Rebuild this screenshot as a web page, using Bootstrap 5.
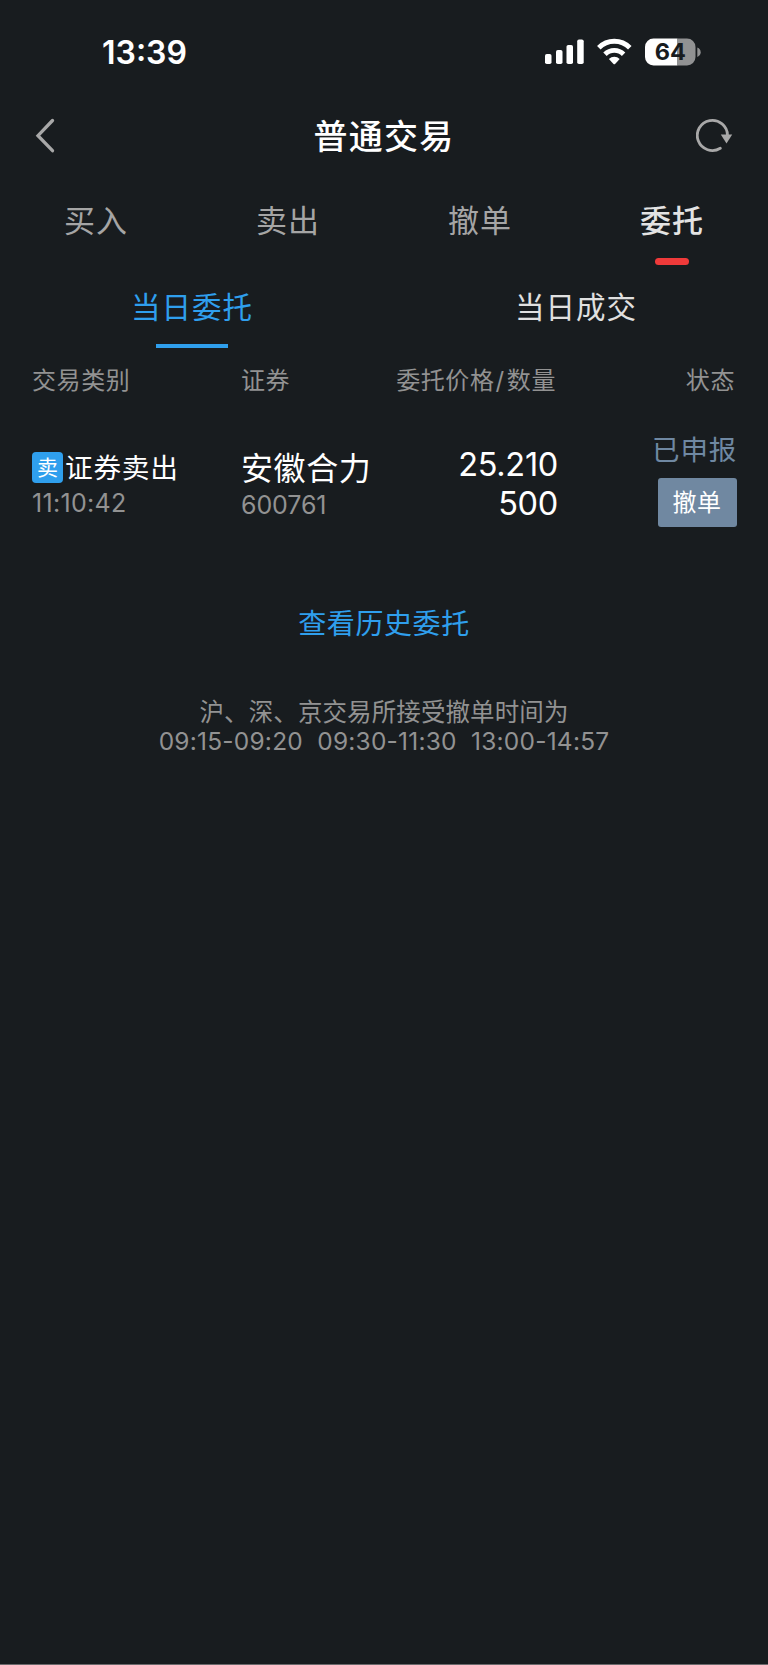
<!DOCTYPE html>
<html lang="zh-CN">
<head>
<meta charset="utf-8">
<meta name="viewport" content="width=device-width, initial-scale=1">
<title>普通交易</title>
<link href="https://cdn.jsdelivr.net/npm/bootstrap@5.3.0/dist/css/bootstrap.min.css" rel="stylesheet">
<style>
  body { background: #181c1f; color: #fff; font-family: Inter, "Noto Sans CJK SC", sans-serif; }
  .screen { height: 1665px; border-bottom: 1px solid #6b696c; }
  .statusbar { height: 104px; padding: 0 69px 0 102px; }
  .clock { font-size: 32px; font-weight: 600; line-height: 104px; padding-top: 1px; }
  .titlebar { height: 64px; padding: 0 32px 0 34px; }
  .titlebar h1 { font-size: 34px; font-weight: 500; line-height: 64px; letter-spacing: 1.2px; padding: 2px 0 0 2px; }
  .tabs-main .nav-link { height: 104px; padding: 0; font-size: 31px; line-height: 105px; letter-spacing: 1px; color: #a5a5a5; }
  .tabs-main .nav-link.active { color: #e3e3e3; font-weight: 500; }
  .tabs-main .nav-link.active::after { content: ""; position: absolute; left: 50%; bottom: 7px; width: 34px; height: 7px; margin-left: -17px; border-radius: 4px; background: #ef3a3a; }
  .tabs-sub .nav-link { height: 76px; padding: 0; font-size: 29.5px; line-height: 71px; letter-spacing: 1px; color: #e0e0e0; }
  .tabs-sub .nav-link.active { color: #2f9fed; }
  .tabs-sub .nav-link.active::after { content: ""; position: absolute; left: 50%; bottom: 0; width: 72px; height: 4px; margin-left: -36px; background: #2f9fed; }
  .order-grid { display: grid; grid-template-columns: 209px 149px 168px 1fr; padding: 0 31px 0 32px; }
  .head-row { height: 64px; font-size: 24px; line-height: 65px; letter-spacing: .6px; color: #929292; }
  .head-row .text-end { padding-right: 2px; }
  .slash { margin: 0 2px 0 1px; }
  .order-row { height: 148px; }
  .side { width: 31px; height: 31px; border-radius: 4px; background: #2f9fed; font-size: 21px; line-height: 32px; }
  .kind { font-size: 27.7px; line-height: 32px; letter-spacing: .7px; margin-left: 2px; }
  .muted { font-size: 25px; color: #929292; }
  .stock { font-size: 32px; line-height: 36px; letter-spacing: .6px; }
  .figure-num { font-size: 32.5px; line-height: 39px; letter-spacing: -.3px; }
  .state { font-size: 27.5px; line-height: 36px; letter-spacing: .8px; color: #6f88a2; }
  .btn-cancel { width: 79px; height: 49px; padding: 0 1px 0 0; border: 0; border-radius: 3px; background: #7088a1; color: #fff; font-size: 24px; line-height: 50px; letter-spacing: .4px; }
  .history { font-size: 28px; line-height: 40px; letter-spacing: .6px; color: #2f9fed; }
  .hint { font-size: 24.5px; line-height: 29px; color: #929292; white-space: pre; letter-spacing: .1px; }
</style>
</head>
<body>
<main class="screen overflow-hidden">
  <div class="statusbar d-flex align-items-center justify-content-between">
    <span class="clock">13:39</span>
    <svg width="157" height="34" viewBox="0 0 157 34" fill="#fff" class="overflow-visible" aria-hidden="true">
      <rect x="3" y="19" width="6.5" height="10" rx="1.8"/>
      <rect x="14" y="15" width="6.5" height="14" rx="1.8"/>
      <rect x="24.5" y="10" width="6.5" height="19" rx="1.8"/>
      <rect x="35.2" y="4.500" width="6.500" height="24.500" rx="1.8"/>
      <g fill="none" stroke="#fff" stroke-width="4.900">
        <path d="M56.800 12.800a21.700 21.700 0 0 1 31 0"/>
        <path d="M63 19.200a13.200 13.200 0 0 1 18.600 0"/>
      </g>
      <path d="M66.900 24a7.800 7.800 0 0 1 10.800 0l-4.600 4.900q-.8.700-1.600 0z"/>
      <path d="M111.500 3.500h24v27h-24a8.500 8.500 0 0 1-8.500-8.500v-10a8.500 8.500 0 0 1 8.500-8.500z"/>
      <path d="M135.500 3.500h9.500a8.500 8.500 0 0 1 8.500 8.500v10a8.500 8.500 0 0 1-8.500 8.500h-9.500z" fill="#919293"/>
      <path d="M155.300 12.500q3.400 1.500 3.400 4.700t-3.400 4.700z" fill="#919293"/>
      <text x="128.300" y="25.400" text-anchor="middle" font-family="Inter" font-size="23.500" font-weight="700" fill="#181c1f">64</text>
    </svg>
  </div>

  <header class="titlebar d-flex align-items-center justify-content-between">
    <svg width="36" height="40" viewBox="0 0 36 40" fill="none" stroke="#a8a8a8" stroke-width="3.300" stroke-linecap="round" stroke-linejoin="miter" aria-label="返回"><path d="M18.500 4.500L4 19.700l14.500 15"/></svg>
    <h1 class="m-0">普通交易</h1>
    <svg width="40" height="40" viewBox="0 0 40 40" aria-label="刷新"><path d="M24.300 32.300A15.100 15.100 0 1 1 31.500 19.500" fill="none" stroke="#a8a8a8" stroke-width="2.800" stroke-linecap="round"/><path d="M24.800 18.500h11.400l-5.700 9z" fill="#a8a8a8"/></svg>
  </header>

  <nav class="tabs-main nav nav-justified">
    <a class="nav-link" href="#">买入</a>
    <a class="nav-link" href="#">卖出</a>
    <a class="nav-link" href="#">撤单</a>
    <a class="nav-link active position-relative" href="#">委托</a>
  </nav>

  <nav class="tabs-sub nav nav-justified">
    <a class="nav-link active position-relative" href="#">当日委托</a>
    <a class="nav-link" href="#">当日成交</a>
  </nav>

  <div class="order-grid head-row">
    <span>交易类别</span>
    <span>证券</span>
    <span class="text-end text-nowrap">委托价格<span class="slash">/</span>数量</span>
    <span class="text-end">状态</span>
  </div>

  <div class="order-grid order-row">
    <div style="padding-top:40px">
      <div class="d-flex align-items-start"><span class="side text-center">卖</span><span class="kind">证券卖出</span></div>
      <div class="muted" style="line-height:38px;letter-spacing:.3px">11:10:42</div>
    </div>
    <div style="padding-top:39px">
      <div class="stock text-nowrap">安徽合力</div>
      <div class="muted" style="line-height:36px;letter-spacing:-.1px">600761</div>
    </div>
    <div class="text-end" style="padding-top:33px">
      <div class="figure-num">25.210</div>
      <div class="figure-num">500</div>
    </div>
    <div class="d-flex flex-column align-items-end" style="padding-top:20px">
      <span class="state">已申报</span>
      <button type="button" class="btn btn-cancel" style="margin-top:10px">撤单</button>
    </div>
  </div>

  <div class="text-center" style="padding-top:44px"><a href="#" class="history d-block text-decoration-none">查看历史委托</a></div>
  <div class="hint text-center" style="padding-top:54px"><div>沪、深、京交易所接受撤单时间为</div><div style="letter-spacing:.22px">09:15-09:20  09:30-11:30  13:00-14:57</div></div>
</main>
<script src="https://cdn.jsdelivr.net/npm/bootstrap@5.3.0/dist/js/bootstrap.bundle.min.js"></script>
</body>
</html>
